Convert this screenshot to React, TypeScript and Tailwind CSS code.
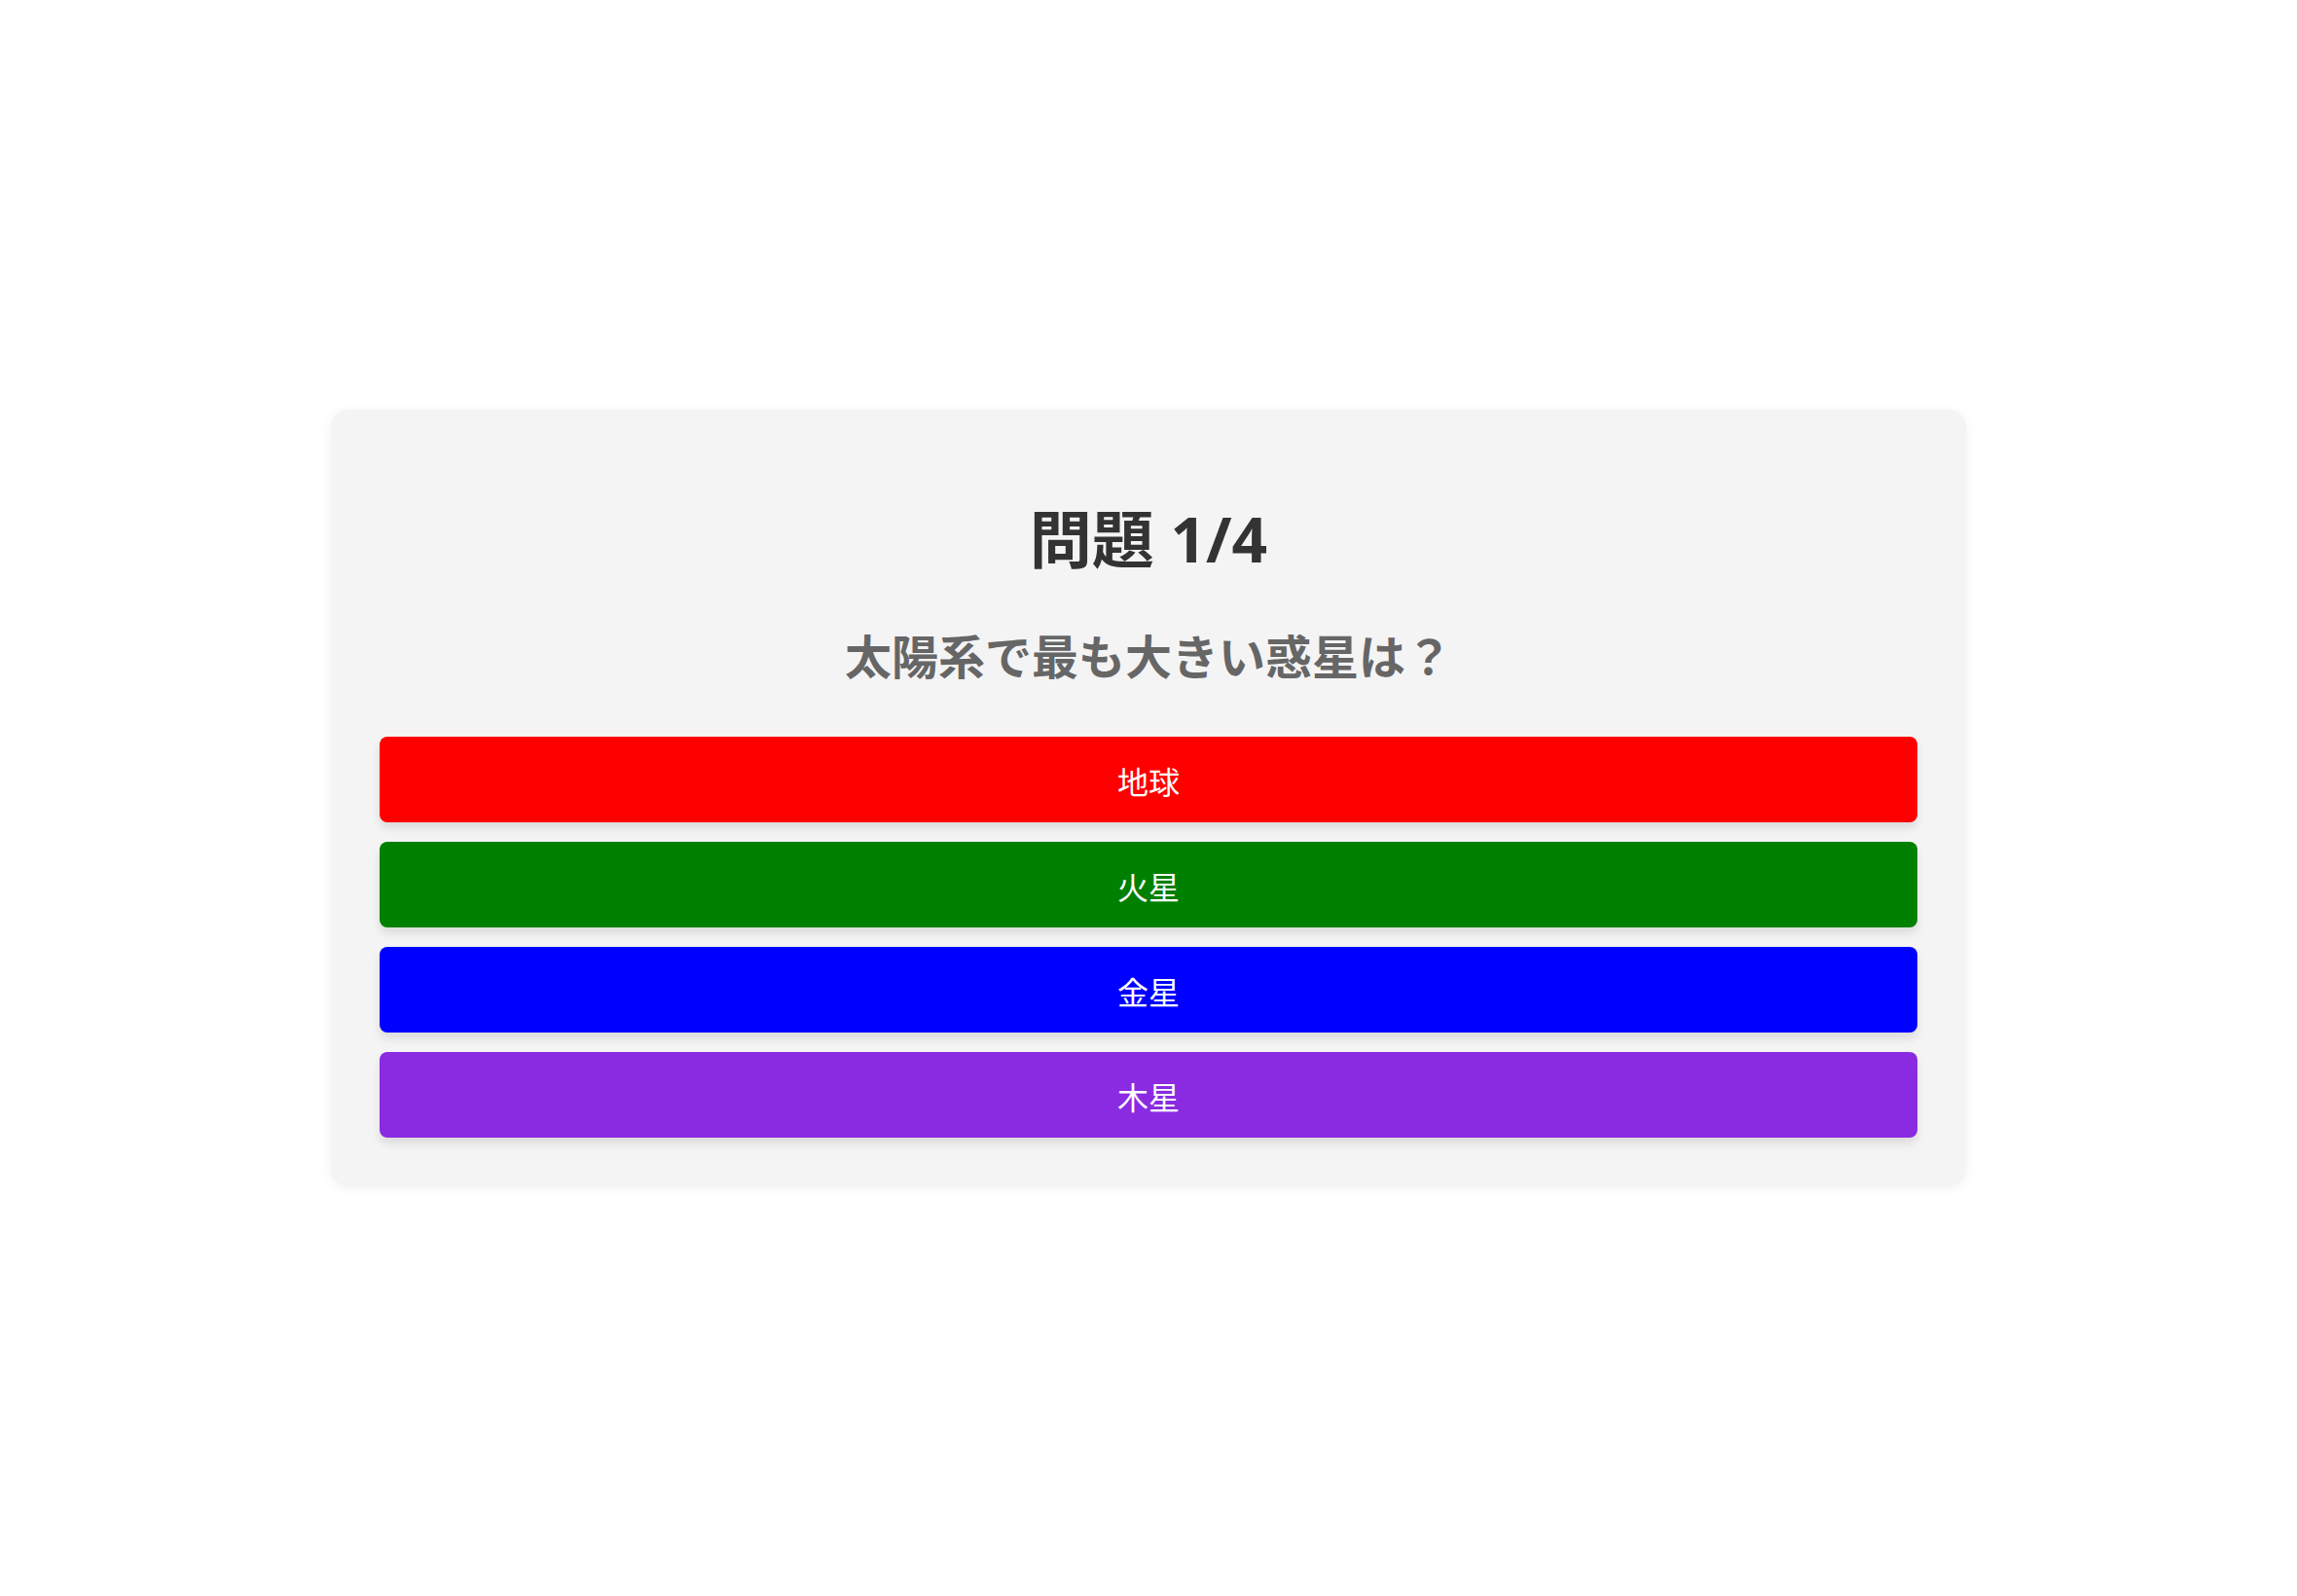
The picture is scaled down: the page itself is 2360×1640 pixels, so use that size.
const options = [
  { label: "地球", color: "bg-[#ff0000]" },
  { label: "火星", color: "bg-[#008000]" },
  { label: "金星", color: "bg-[#0000ff]" },
  { label: "木星", color: "bg-[#8a2be2]" },
];

export default function App() {
  return (
    <div className="min-h-screen bg-white flex items-center justify-center font-['Noto_Sans','Noto_Sans_CJK_JP',sans-serif]">
      <div className="w-[1680px] bg-[#f4f4f5] rounded-[18px] shadow-[0_2px_12px_rgba(0,0,0,0.06)] px-[50px] pt-[85px] pb-[50px]">
        <h1 className="text-center text-[64px] leading-[96px] font-bold text-[#333333]">問題 1/4</h1>
        <p className="mt-[37px] text-center text-[48px] leading-[72px] font-bold text-[#666666]">
          太陽系で最も大きい惑星は？
        </p>
        <div className="mt-[46px] flex flex-col gap-[20px]">
          {options.map((o) => (
            <button
              key={o.label}
              className={`h-[88px] w-full rounded-[8px] pt-[6px] ${o.color} text-white text-[32px] shadow-[0_6px_10px_rgba(0,0,0,0.1)]`}
            >
              {o.label}
            </button>
          ))}
        </div>
      </div>
    </div>
  );
}
